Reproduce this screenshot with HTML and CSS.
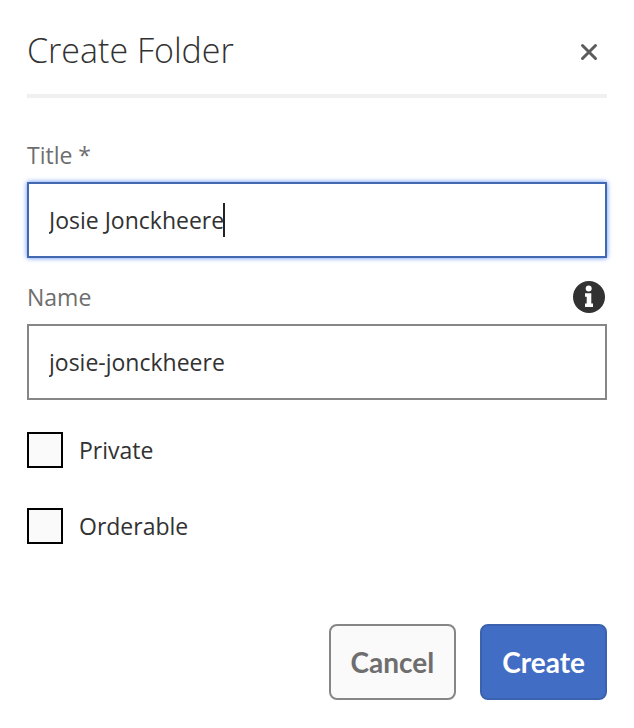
FILE: index.html
```html
<!DOCTYPE html>
<html lang="en">
<head>
    <meta charset="UTF-8">
    <meta name="viewport" content="width=device-width, initial-scale=1.0">
    <title>Create Folder</title>
    <link rel="stylesheet" href="styles.css">
</head>
<body>
    <form class="dialog">
        <header class="dialog-header">
            <h1>Create Folder</h1>
            <button type="button" class="close" aria-label="Close">
                <svg width="18" height="18" viewBox="0 0 18 18"><path d="M2.5 2.5l13 13M15.5 2.5l-13 13"/></svg>
            </button>
        </header>

        <div class="field">
            <div class="field-head">
                <label for="title">Title *</label>
            </div>
            <div class="input-wrap">
                <input type="text" id="title" class="text-input active" value="Josie Jonckheere" required>
                <span class="caret"></span>
            </div>
        </div>

        <div class="field">
            <div class="field-head">
                <label for="name">Name</label>
                <svg class="info" width="32" height="32" viewBox="0 0 32 32">
                    <circle class="info-disc" cx="16" cy="16" r="16"/>
                    <circle cx="15.7" cy="7.6" r="3"/>
                    <path d="M12 12.3h6.3v10.2H20V26h-8v-3.5h1.7v-6.7H12z"/>
                </svg>
            </div>
            <input type="text" id="name" class="text-input" value="josie-jonckheere">
        </div>

        <div class="options">
            <label class="option"><input type="checkbox" name="private"> Private</label>
            <label class="option"><input type="checkbox" name="orderable"> Orderable</label>
        </div>

        <footer class="dialog-footer">
            <button type="button" class="btn">Cancel</button>
            <button type="submit" class="btn btn-primary">Create</button>
        </footer>
    </form>
</body>
</html>
```
FILE: styles.css
```css
* { box-sizing: border-box; }
body { margin: 0; background: #fff; color: #323232; font-family: "Open Sans", "Noto Sans", sans-serif; font-size: 23px; }
.dialog { padding: 0 27px 28px; }

.dialog-header { display: flex; justify-content: space-between; align-items: center;
                 padding: 28px 9px 22px 0; border-bottom: 4px solid #f0f0f0; margin-bottom: 36px; }
h1 { margin: 0; font-size: 34px; font-weight: 300; line-height: 44px; }
.close { display: flex; padding: 4px 0 0; border: 0; background: none; cursor: pointer; }
.close svg { fill: none; stroke: #5c5c5c; stroke-width: 3; stroke-linecap: round; }

.field { margin-bottom: 18px; }
.field-head { display: flex; justify-content: space-between; align-items: center; height: 42px; margin-bottom: 6px; color: #6e6e6e; }
.info { margin-right: 2px; fill: #fff; }
.info-disc { fill: #323232; }
.input-wrap { position: relative; }
.text-input { display: block; width: 100%; height: 76px; padding: 0 20px; border: 2px solid #868686; border-radius: 0;
              background: #fff; color: #323232; font: inherit; outline: none; }
.text-input.active { border-color: #4169b2; box-shadow: 0 0 5px #5c8cf0; }
.caret { position: absolute; left: 196px; top: 21px; width: 2px; height: 34px; background: #222; }

.options { display: flex; flex-direction: column; align-items: flex-start; gap: 40px; margin-top: 32px; }
.option { display: flex; align-items: center; gap: 16px; height: 36px; }
.option input { appearance: none; width: 36px; height: 36px; margin: 0; border: 2px solid #000; background: #fafafa; }
.option input:checked { background: #326ec8; }

.dialog-footer { display: flex; justify-content: flex-end; gap: 24px; margin-top: 80px; }
.btn { height: 76px; padding: 0 20px; border: 2px solid #868686; border-radius: 8px; background: #fafafa;
       color: #6e6e6e; font: bold 28px Lato, sans-serif; cursor: pointer; }
.btn-primary { border-color: #3a62ae; background: #426dc4; color: #fff; }
```
